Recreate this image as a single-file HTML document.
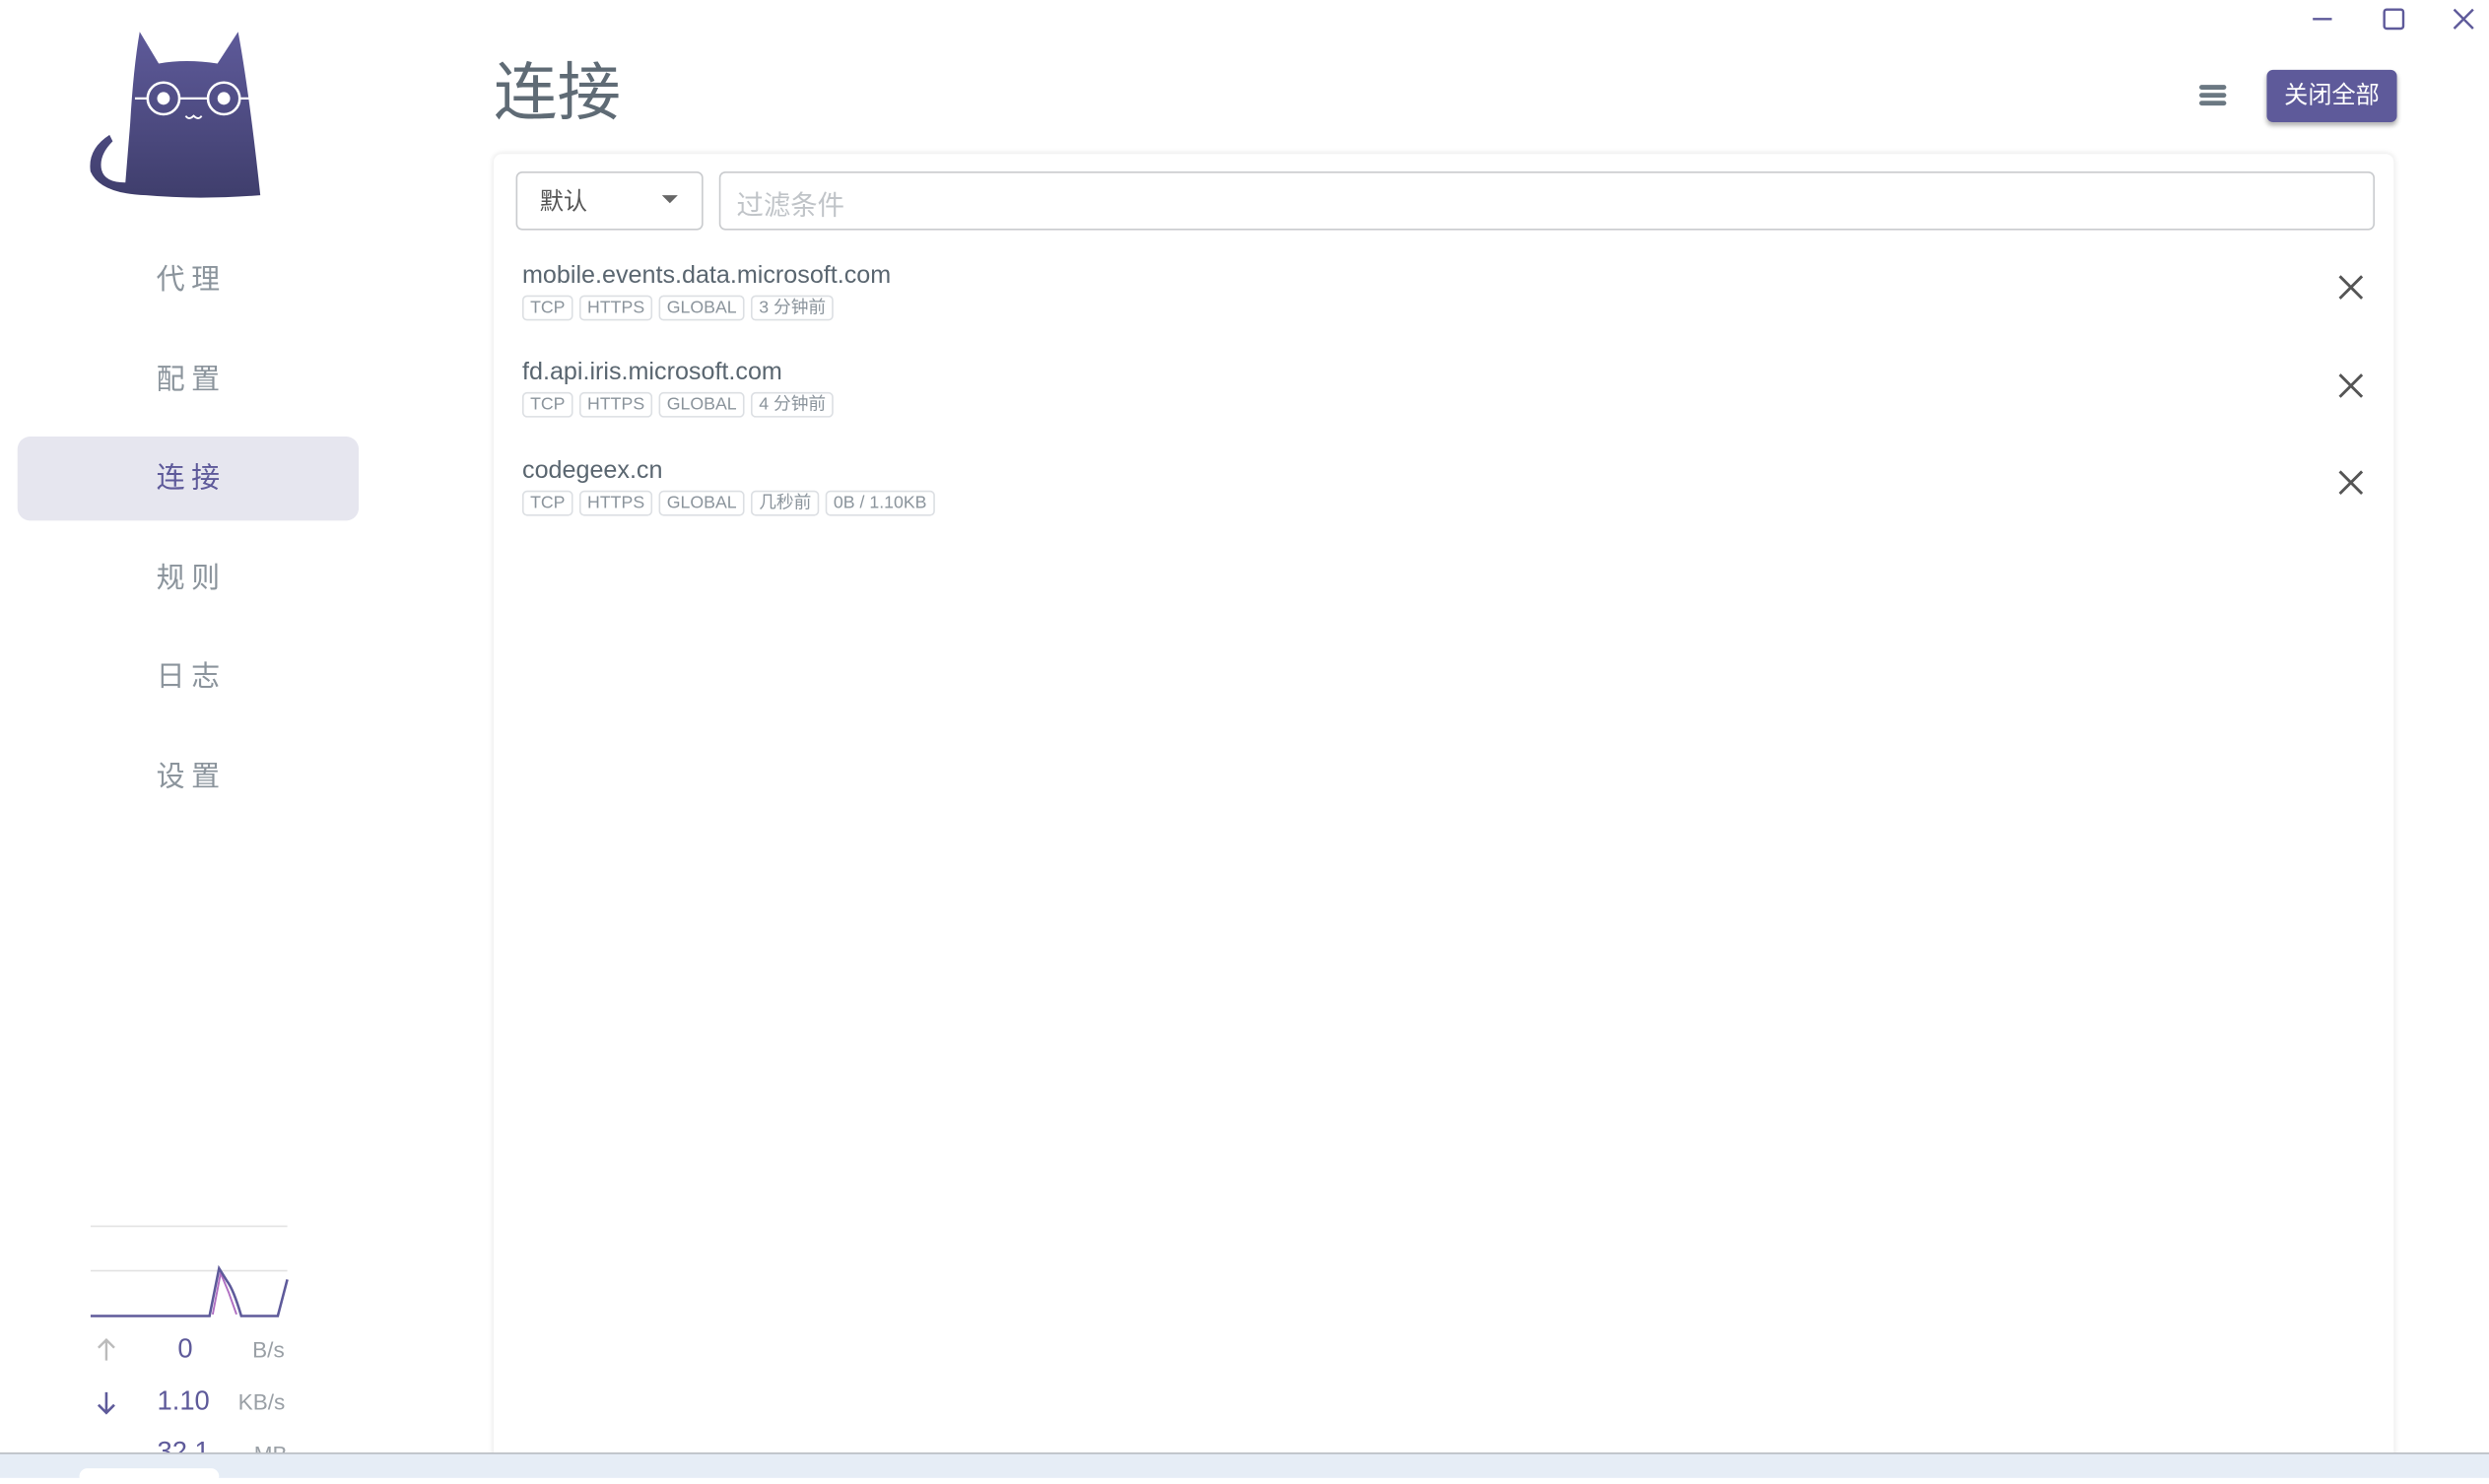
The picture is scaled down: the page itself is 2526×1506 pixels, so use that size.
<!DOCTYPE html>
<html><head><meta charset="utf-8"><style>
html,body{margin:0;padding:0;width:2526px;height:1498px;overflow:hidden;background:#fff}
#w{position:absolute;left:0;top:0;width:1568px;height:930px;transform:scale(1.61097);transform-origin:0 0;font-family:"Liberation Sans","Noto Sans CJK SC",sans-serif;background:#fff}
.a{position:absolute}
.nav{position:absolute;left:13px;width:215px;height:53px;line-height:53px;text-align:center;font-size:18px;letter-spacing:4px;color:#8b949c}
.tag{display:inline-block;border:1px solid #dcdfe3;border-radius:3px;font-size:11px;color:#8b949c;padding:0 4px;height:14px;line-height:14px;margin-right:4px}
.row{position:absolute;left:329px}
.dom{font-size:15.6px;color:#5a6670;line-height:18px}
.x{position:absolute;left:1472px;width:18px;height:18px}
</style></head><body><div id="w">
<svg class="a" style="left:55px;top:18px" width="112" height="110" viewBox="0 0 112 110">
<defs><linearGradient id="g" x1="0" y1="0" x2="0" y2="1"><stop offset="0" stop-color="#5e5a9a"/><stop offset="1" stop-color="#3f3e6c"/></linearGradient></defs>
<path d="M33 2 L45 22 Q62 19 82 22 L95 2 Q102 40 109 105 Q70 108 37 105 Q8 104 2 90 Q0 76 14 67 L16 71 Q7 80 9 89 Q11 97 24 97 L27 60 Q29 25 33 2Z" fill="url(#g)"/>
<circle cx="48" cy="44" r="10" fill="none" stroke="#fff" stroke-width="1.6"/><circle cx="86" cy="44" r="10" fill="none" stroke="#fff" stroke-width="1.6"/>
<line x1="58" y1="44" x2="76" y2="44" stroke="#fff" stroke-width="1.4"/><line x1="30" y1="44" x2="38" y2="44" stroke="#fff" stroke-width="1.4"/><line x1="96" y1="44" x2="103" y2="44" stroke="#fff" stroke-width="1.4"/>
<circle cx="48" cy="44" r="4" fill="#fff"/><circle cx="86" cy="44" r="4" fill="#fff"/>
<path d="M62 55 Q64 58 67 55 Q70 58 72 55" fill="none" stroke="#fff" stroke-width="1.2"/>
</svg>
<div class="nav" style="top:150px">代理</div>
<div class="nav" style="top:213px">配置</div>
<div class="a" style="left:11px;top:275px;width:215px;height:53px;background:#e6e6ef;border-radius:8px"></div>
<div class="nav" style="top:275px;color:#5e5a9a">连接</div>
<div class="nav" style="top:338px">规则</div>
<div class="nav" style="top:400px">日志</div>
<div class="nav" style="top:463px">设置</div>
<svg class="a" style="left:57px;top:770px" width="125" height="62"><line x1="0" y1="2.5" x2="124" y2="2.5" stroke="#e3e3e3"/><line x1="0" y1="30.5" x2="124" y2="30.5" stroke="#e3e3e3"/>
<path d="M77 58 L82 32 L87 44 L92 58" stroke="#b06fc2" stroke-width="1.2" fill="none"/>
<path d="M0 59 L75 59 L81 29 L86 37 Q90 42 95 59 L118 59 L124 36" stroke="#5e5a9a" stroke-width="1.6" fill="none"/></svg>
<svg class="a" style="left:59px;top:842px" width="16" height="16"><path d="M8 15 V2 M3 7 L8 2 L13 7" stroke="#bbb" stroke-width="1.5" fill="none"/></svg>
<div class="a" style="left:112px;top:840px;font-size:17px;color:#5e5a9a">0</div>
<div class="a" style="left:159px;top:842px;font-size:14px;color:#9aa0a6">B/s</div>
<svg class="a" style="left:59px;top:876px" width="16" height="16"><path d="M8 1 V14 M3 9 L8 14 L13 9" stroke="#5e5a9a" stroke-width="1.6" fill="none"/></svg>
<div class="a" style="left:99px;top:873px;font-size:17px;color:#5e5a9a">1.10</div>
<div class="a" style="left:150px;top:875px;font-size:14px;color:#9aa0a6">KB/s</div>
<div class="a" style="left:99px;top:905px;font-size:17px;color:#5e5a9a">32.1</div>
<div class="a" style="left:160px;top:908px;font-size:14px;color:#9aa0a6">MB</div>
<div class="a" style="left:311px;top:26px;font-size:40px;color:#5f6b75">连接</div>
<svg class="a" style="left:1385px;top:53px" width="18" height="14"><g stroke="#6b7882" stroke-width="3" stroke-linecap="round"><line x1="2" y1="2" x2="16" y2="2"/><line x1="2" y1="7" x2="16" y2="7"/><line x1="2" y1="12" x2="16" y2="12"/></g></svg>
<div class="a" style="left:1428px;top:44px;width:82px;height:33px;background:#5e5a9a;border-radius:4px;color:#fff;font-size:15px;line-height:33px;text-align:center;box-shadow:0 2px 3px rgba(0,0,0,.3)">关闭全部</div>
<svg class="a" style="left:1450px;top:0" width="118" height="26"><g stroke="#5e5a9a" stroke-width="1.5" fill="none"><line x1="7" y1="12" x2="19" y2="12"/><rect x="52" y="6" width="12" height="12" rx="1.5"/><line x1="96" y1="6" x2="108" y2="18"/><line x1="108" y1="6" x2="96" y2="18"/></g></svg>
<div class="a" style="left:311px;top:97px;width:1197px;height:830px;background:#fff;border-radius:5px;box-shadow:0 0 4px rgba(0,0,0,.12)"></div>
<div class="a" style="left:325px;top:108px;width:116px;height:35px;border:1px solid #c9cbce;border-radius:4px"></div>
<div class="a" style="left:340px;top:116px;font-size:15px;color:#555">默认</div>
<div class="a" style="left:417px;top:123px;width:0;height:0;border-left:5px solid transparent;border-right:5px solid transparent;border-top:5px solid #666"></div>
<div class="a" style="left:453px;top:108px;width:1041px;height:35px;border:1px solid #c9cbce;border-radius:4px"></div>
<div class="a" style="left:464px;top:115px;font-size:17px;color:#c0c4c8">过滤条件</div>
<div class="row" style="top:165px"><div class="dom">mobile.events.data.microsoft.com</div><div style="margin-top:1px"><span class="tag">TCP</span><span class="tag">HTTPS</span><span class="tag">GLOBAL</span><span class="tag">3 分钟前</span></div></div>
<div class="row" style="top:226px"><div class="dom">fd.api.iris.microsoft.com</div><div style="margin-top:1px"><span class="tag">TCP</span><span class="tag">HTTPS</span><span class="tag">GLOBAL</span><span class="tag">4 分钟前</span></div></div>
<div class="row" style="top:288px"><div class="dom">codegeex.cn</div><div style="margin-top:1px"><span class="tag">TCP</span><span class="tag">HTTPS</span><span class="tag">GLOBAL</span><span class="tag">几秒前</span><span class="tag">0B / 1.10KB</span></div></div>
<svg class="x" style="top:172px"><g stroke="#555" stroke-width="1.8"><line x1="2" y1="2" x2="16" y2="16"/><line x1="16" y1="2" x2="2" y2="16"/></g></svg>
<svg class="x" style="top:234px"><g stroke="#555" stroke-width="1.8"><line x1="2" y1="2" x2="16" y2="16"/><line x1="16" y1="2" x2="2" y2="16"/></g></svg>
<svg class="x" style="top:295px"><g stroke="#555" stroke-width="1.8"><line x1="2" y1="2" x2="16" y2="16"/><line x1="16" y1="2" x2="2" y2="16"/></g></svg>
<div class="a" style="left:0;top:915px;width:1568px;height:15px;background:#e6edf6;border-top:1px solid #b8bcc2"></div>
<div class="a" style="left:50px;top:925px;width:88px;height:10px;background:#fff;border-radius:6px"></div>
</div></body></html>
